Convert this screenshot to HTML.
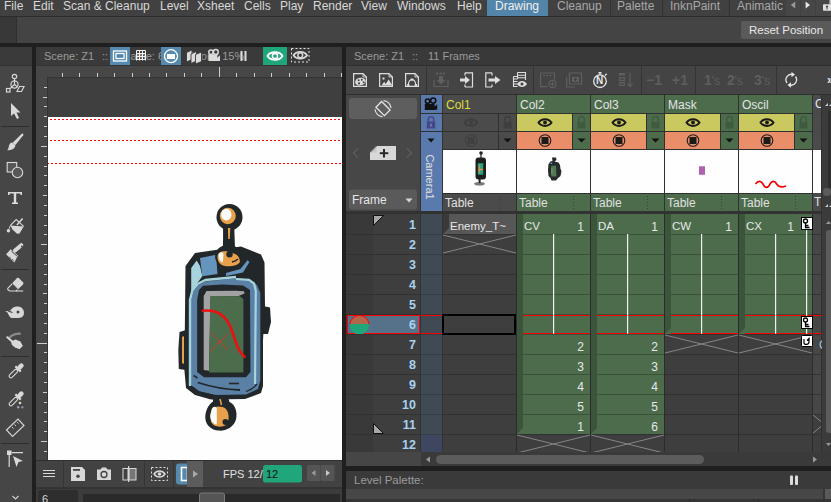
<!DOCTYPE html>
<html><head><meta charset="utf-8">
<style>
*{box-sizing:border-box;margin:0;padding:0}
html,body{width:831px;height:502px;overflow:hidden;background:#1f1f1f;font-family:"Liberation Sans",sans-serif;font-size:12px;color:#d8d8d8}
.a{position:absolute}
.t{position:absolute;white-space:pre;line-height:14px}
svg{position:absolute;overflow:visible}
</style></head><body>
<!-- MENU BAR -->
<div class="a" style="left:0;top:0;width:831px;height:16px;background:#414141"></div>
<div class="a" style="left:0;top:16px;width:831px;height:1px;background:#2c2c2c"></div>
<div class="t" style="left:4px;top:-1px;font-size:12px">File</div>
<div class="t" style="left:33px;top:-1px">Edit</div>
<div class="t" style="left:63px;top:-1px">Scan &amp; Cleanup</div>
<div class="t" style="left:160px;top:-1px">Level</div>
<div class="t" style="left:197px;top:-1px">Xsheet</div>
<div class="t" style="left:244px;top:-1px">Cells</div>
<div class="t" style="left:280px;top:-1px">Play</div>
<div class="t" style="left:313px;top:-1px">Render</div>
<div class="t" style="left:361px;top:-1px">View</div>
<div class="t" style="left:397px;top:-1px">Windows</div>
<div class="t" style="left:457px;top:-1px">Help</div>
<div class="a" style="left:487px;top:0;width:61px;height:16px;background:#5385aa"></div>
<div class="t" style="left:495px;top:-1px;color:#f0f0f0">Drawing</div>
<div class="t" style="left:557px;top:-1px;color:#a8a8a8">Cleanup</div>
<div class="a" style="left:610px;top:0;width:1px;height:16px;background:#333"></div>
<div class="t" style="left:617px;top:-1px;color:#a8a8a8">Palette</div>
<div class="a" style="left:662px;top:0;width:1px;height:16px;background:#333"></div>
<div class="t" style="left:670px;top:-1px;color:#a8a8a8">InknPaint</div>
<div class="a" style="left:729px;top:0;width:1px;height:16px;background:#333"></div>
<div class="a" style="left:730px;top:0;width:56px;height:16px;overflow:hidden"><div class="t" style="left:7px;top:-1px;color:#a8a8a8">Animatic</div></div>
<div class="a" style="left:786px;top:0;width:14px;height:16px;background:#474747"></div>
<div class="a" style="left:801px;top:0;width:14px;height:16px;background:#474747"></div>
<div class="a" style="left:816px;top:0;width:15px;height:16px;background:#474747"></div>

<!-- TOOLBAR ROW -->
<div class="a" style="left:0;top:17px;width:831px;height:26px;background:#444444"></div>
<div class="a" style="left:0;top:17px;width:16px;height:26px;background:#383838"></div>
<div class="a" style="left:16px;top:17px;width:1px;height:26px;background:#303030"></div>
<div class="a" style="left:741px;top:21px;width:95px;height:18px;background:#5a5a5a;border-radius:2px"></div>
<div class="t" style="left:749px;top:23px;font-size:11.5px;color:#e8e8e8">Reset Position</div>

<!-- LEFT TOOL PANEL -->
<div class="a" style="left:0;top:47px;width:32px;height:18px;background:#3a3a3a"></div>
<div class="a" style="left:0;top:65px;width:32px;height:1px;background:#333"></div>
<div class="a" style="left:0;top:66px;width:32px;height:436px;background:#464646"></div>


<!-- left tool icons -->
<svg class="a" style="left:0;top:0" width="32" height="502" viewBox="0 0 32 502">
<g fill="none" stroke="#d6d6d6" stroke-width="1.2">
 <circle cx="14.5" cy="76.5" r="2.2"/>
 <line x1="14.5" y1="78.7" x2="14.5" y2="84.5"/>
 <circle cx="14.5" cy="84.5" r="3.6"/>
 <path d="M14.5 84.5 L11.5 87 M14.5 84.5 L17.5 87"/>
 <rect x="6.5" y="88.5" width="3.5" height="3.5"/>
 <path d="M10 88.5 L12 87"/>
 <path d="M19.5 86.5 L24 86.5 L21.5 91.5 L17 91.5 Z"/>
</g>
<path d="M11 103 L11 116 L14 113.5 L17 119 L19 118 L16.5 112.5 L20.5 112.5 Z" fill="#d8d8d8"/>
<rect x="1" y="126" width="28" height="1" fill="#2e2e2e"/>
<path d="M21.8 133.8 C22.8 133.2 23.8 134.2 23.2 135.2 L15.2 145.2 L12.6 142.8 Z" fill="#d8d8d8"/>
<path d="M12.2 142.6 L15.4 145.6 C15 148.6 11.5 150.8 7.2 150.2 C8.8 148.8 8.6 146.4 9.4 144.6 C10 143.4 11 142.6 12.2 142.6 Z" fill="#d8d8d8"/>
<rect x="7.2" y="162.5" width="9.5" height="9.5" fill="#575757" stroke="#dadada" stroke-width="1.1"/>
<circle cx="17.5" cy="172.5" r="5.2" fill="#575757" stroke="#dadada" stroke-width="1.1"/>
<path d="M8 192 L22 192 L22 195 L20.5 195 L20.5 193.6 L16.2 193.6 L16.2 202.5 L18 202.5 L18 204 L12 204 L12 202.5 L13.8 202.5 L13.8 193.6 L9.5 193.6 L9.5 195 L8 195 Z" fill="#dcdcdc"/>
<path d="M10.4 225.4 L23.7 226.4 L19.5 233.6 L17 233.8 L12.3 229.2 Z" fill="#d8d8d8"/>
<path d="M10.4 225.4 L16.2 219.6 L23.7 226.4" fill="none" stroke="#d8d8d8" stroke-width="1.1"/>
<path d="M10.8 225.2 C9.5 226.5 9.2 228 9.3 229.3" fill="none" stroke="#d8d8d8" stroke-width="1"/>
<circle cx="8.4" cy="230.8" r="1.7" fill="#d8d8d8"/>
<path d="M16.9 225 L22.6 218.4" stroke="#d8d8d8" stroke-width="1.5"/>
<path d="M15 250.6 L21.3 245.2" stroke="#d8d8d8" stroke-width="4" stroke-linecap="round"/>
<circle cx="21.9" cy="246.6" r="1" fill="#464646"/>
<path d="M10.7 249.2 L18 255.4 L14.3 262.6 L6.1 254.3 Z" fill="#d8d8d8"/>
<path d="M11.4 251 L17 256.2" stroke="#464646" stroke-width="1"/>
<path d="M12 259.2 L13.5 260.5 M9.5 257 L10.8 258.2" stroke="#464646" stroke-width="0.9"/>
<rect x="1" y="269" width="28" height="1" fill="#2e2e2e"/>
<path d="M16.8 278.2 C17.5 277.6 18.3 277.6 19 278.2 L23 282.2 C23.6 282.9 23.6 283.7 23 284.4 L18.2 289.2 L12.2 283.2 Z" fill="#d8d8d8"/>
<path d="M12.2 283.8 L8 288 C7.5 288.6 7.5 289.3 8 289.8 L9.6 291 L16 291 L17.6 289.6" fill="none" stroke="#d8d8d8" stroke-width="1.1"/>
<path d="M16 291 L23.2 291" stroke="#d8d8d8" stroke-width="1.1"/>
<path d="M5 311.5 L10.5 310.5 C12 307.5 15 306 18.5 306.5 C23 307.2 24.5 311 23.8 314.5 C23.2 317 21 318 18 318 L11.5 318 C9.5 317.5 8.5 314.5 7.5 312.5 Z" fill="#d8d8d8"/>
<circle cx="18" cy="312" r="1.5" fill="#464646"/>
<path d="M8 311 L12.5 312.5" stroke="#424242" stroke-width="1.2"/>
<path d="M9 338 C11.5 335 16 333.4 20.8 333.6" fill="none" stroke="#8a8a8a" stroke-width="2.2"/>
<path d="M7.3 337.2 L13 342.2" stroke="#d8d8d8" stroke-width="2" stroke-linecap="round"/>
<path d="M11 341.5 L15.5 339.6 L20.5 341.5 L22.8 346 L19.5 349.2 L15 347.5 L12 345 Z" fill="#d8d8d8"/>
<rect x="1" y="356" width="28" height="1" fill="#2e2e2e"/>
<g transform="translate(15.5 371.5) rotate(45)"><rect x="-2.3" y="-10.5" width="4.6" height="6.5" rx="2" fill="#d8d8d8"/><rect x="-3.8" y="-4.8" width="7.6" height="2.4" rx="0.6" fill="#d8d8d8"/><rect x="-1.7" y="-2.2" width="3.4" height="10.5" rx="1.7" fill="none" stroke="#d8d8d8" stroke-width="1.1"/></g>
<g transform="translate(15.5 399.5) rotate(45)"><rect x="-2.3" y="-10.5" width="4.6" height="6.5" rx="2" fill="#d8d8d8"/><rect x="-3.8" y="-4.8" width="7.6" height="2.4" rx="0.6" fill="#d8d8d8"/><rect x="-1.7" y="-2.2" width="3.4" height="10.5" rx="1.7" fill="none" stroke="#d8d8d8" stroke-width="1.1"/></g>
<circle cx="20" cy="403" r="1.3" fill="#d8d8d8"/><circle cx="18.2" cy="407.2" r="1.2" fill="#8fa3b8"/><circle cx="22.3" cy="407.2" r="1.2" fill="#8a8a8a"/>
<path d="M6.5 430 L18 419 L24 425.5 L12.5 436.5 Z" fill="none" stroke="#d0d4d6" stroke-width="1.2"/>
<path d="M12 427 L13.5 428.5 M14.5 424.5 L16 426 M17 422 L18.5 423.5" stroke="#d0d0d0" stroke-width="1"/>
<rect x="1" y="443" width="28" height="1" fill="#2e2e2e"/>
<rect x="7" y="450.5" width="4.5" height="4.5" fill="#d8d8d8"/>
<path d="M9.2 455 L9.2 467 M11.5 452.7 L23 452.7" stroke="#d8d8d8" stroke-width="1.2"/>
<path d="M13 456 L23 461 L18.5 462 L16.5 467 Z" fill="#d8d8d8"/>
<path d="M12.5 496 L15.5 499 L18.5 496" fill="none" stroke="#cfcfcf" stroke-width="1.1"/>
</svg>

<!-- VIEWER PANEL -->
<div class="a" style="left:36px;top:47px;width:306px;height:18px;background:#3a3a3a"></div>
<div class="a" style="left:36px;top:65px;width:306px;height:1px;background:#333"></div>
<div class="a" style="left:36px;top:66px;width:306px;height:394px;background:#474747"></div>
<div class="a" style="left:47px;top:77px;width:295px;height:383px;background:#3f3f3f;border-left:1px solid #353535;border-top:1px solid #353535"></div>
<div class="a" style="left:48px;top:117px;width:294px;height:343px;background:#fefefe"></div>

<!-- viewer title -->
<div class="t" style="left:44px;top:49px;font-size:11px;color:#9a9a9a">Scene: Z1</div>
<div class="t" style="left:102px;top:49px;font-size:11px;color:#9a9a9a">::</div>
<div class="t" style="left:120px;top:49px;font-size:11px;color:#9a9a9a">Frame: 6</div>
<div class="t" style="left:171px;top:49px;font-size:11px;color:#9a9a9a">::</div>
<div class="t" style="left:188px;top:49px;font-size:11px;color:#9a9a9a">Zoom: 15%</div>
<div class="a" style="left:110px;top:47px;width:20px;height:18px;background:#5589ae"></div>
<svg class="a" style="left:110px;top:47px" width="20" height="18"><rect x="3.5" y="4" width="13" height="10" fill="none" stroke="#fff" stroke-width="1.3"/><rect x="6" y="6.5" width="8" height="5" fill="none" stroke="#fff" stroke-width="1.2"/></svg>
<svg class="a" style="left:136px;top:50px" width="11" height="11"><g stroke="#f0f0f0" stroke-width="1"><path d="M0.5 0.5V10.5M3.5 0.5V10.5M6.5 0.5V10.5M9.5 0.5V10.5M0.5 0.5H9.5M0.5 3.5H9.5M0.5 6.5H9.5M0.5 9.5H9.5"/></g></svg>
<div class="a" style="left:161px;top:47px;width:20px;height:18px;background:#5589ae"></div>
<svg class="a" style="left:161px;top:47px" width="20" height="18"><circle cx="10" cy="9.2" r="6.5" fill="none" stroke="#fff" stroke-width="1.3"/><rect x="6" y="7" width="8" height="5" fill="#fff"/></svg>
<svg class="a" style="left:185px;top:49px" width="20" height="15"><g fill="#dcdcdc" stroke="#3a3a3a" stroke-width="0.9"><path d="M1.5 3.5 L7 1 L7 10.5 L1.5 13 Z"/><path d="M6 5 L11.5 2.5 L11.5 12 L6 14.5 Z"/><path d="M10.5 5.5 L16.5 3 L16.5 12.5 L10.5 15 Z"/></g></svg>
<svg class="a" style="left:207px;top:49px" width="14" height="14"><g fill="none" stroke="#dcdcdc" stroke-width="1.5"><circle cx="4" cy="3.2" r="2.2"/><circle cx="8.8" cy="3" r="2.4"/></g><rect x="1.5" y="6" width="8.8" height="6" fill="#dcdcdc"/><path d="M10 9 L13 6.3 V12 H10 Z" fill="#dcdcdc"/></svg>
<svg class="a" style="left:239px;top:50px" width="9" height="12"><rect x="1.5" y="1" width="2" height="10" fill="#dcdcdc"/><rect x="5.5" y="1" width="2" height="10" fill="#dcdcdc"/></svg>
<div class="a" style="left:263px;top:47px;width:24px;height:18px;background:#21a57b"></div>
<svg class="a" style="left:263px;top:47px" width="24" height="18"><path d="M4.5 9 C7.5 4 16.5 4 19.5 9 C16.5 14 7.5 14 4.5 9 Z" fill="none" stroke="#fff" stroke-width="1.8"/><circle cx="12" cy="9" r="2.6" fill="none" stroke="#fff" stroke-width="1.5"/></svg>
<svg class="a" style="left:291px;top:48px" width="19" height="15"><rect x="0.5" y="0.5" width="17.5" height="13.5" fill="none" stroke="#e0e0e0" stroke-width="1" stroke-dasharray="2 2"/><path d="M2.5 7.3 C5.5 2.8 13 2.8 16 7.3 C13 11.8 5.5 11.8 2.5 7.3 Z" fill="none" stroke="#dadada" stroke-width="1.7"/><circle cx="9.25" cy="7.3" r="2.4" fill="none" stroke="#dadada" stroke-width="1.4"/></svg>
<svg class="a" style="left:0;top:0" width="831" height="502"><rect x="62" y="73" width="1" height="4" fill="#cfcfcf"/><rect x="79" y="73" width="1" height="4" fill="#cfcfcf"/><rect x="97" y="73" width="1" height="4" fill="#cfcfcf"/><rect x="114" y="73" width="1" height="4" fill="#cfcfcf"/><rect x="132" y="73" width="1" height="4" fill="#cfcfcf"/><rect x="149" y="73" width="1" height="4" fill="#cfcfcf"/><rect x="166" y="73" width="1" height="4" fill="#cfcfcf"/><rect x="184" y="73" width="1" height="4" fill="#cfcfcf"/><rect x="201" y="73" width="1" height="4" fill="#cfcfcf"/><rect x="219" y="67" width="1" height="10" fill="#cfcfcf"/><rect x="236" y="73" width="1" height="4" fill="#cfcfcf"/><rect x="254" y="73" width="1" height="4" fill="#cfcfcf"/><rect x="271" y="73" width="1" height="4" fill="#cfcfcf"/><rect x="289" y="73" width="1" height="4" fill="#cfcfcf"/><rect x="306" y="73" width="1" height="4" fill="#cfcfcf"/><rect x="324" y="73" width="1" height="4" fill="#cfcfcf"/><rect x="341" y="73" width="1" height="4" fill="#cfcfcf"/><rect x="44" y="87" width="3" height="1" fill="#cfcfcf"/><rect x="43" y="97" width="4" height="1" fill="#cfcfcf"/><rect x="44" y="106" width="3" height="1" fill="#cfcfcf"/><rect x="44" y="116" width="3" height="1" fill="#cfcfcf"/><rect x="44" y="126" width="3" height="1" fill="#cfcfcf"/><rect x="44" y="136" width="3" height="1" fill="#cfcfcf"/><rect x="41" y="146" width="6" height="1" fill="#cfcfcf"/><rect x="44" y="156" width="3" height="1" fill="#cfcfcf"/><rect x="44" y="166" width="3" height="1" fill="#cfcfcf"/><rect x="44" y="175" width="3" height="1" fill="#cfcfcf"/><rect x="44" y="185" width="3" height="1" fill="#cfcfcf"/><rect x="43" y="195" width="4" height="1" fill="#cfcfcf"/><rect x="44" y="205" width="3" height="1" fill="#cfcfcf"/><rect x="44" y="215" width="3" height="1" fill="#cfcfcf"/><rect x="44" y="225" width="3" height="1" fill="#cfcfcf"/><rect x="44" y="234" width="3" height="1" fill="#cfcfcf"/><rect x="41" y="244" width="6" height="1" fill="#cfcfcf"/><rect x="44" y="254" width="3" height="1" fill="#cfcfcf"/><rect x="44" y="264" width="3" height="1" fill="#cfcfcf"/><rect x="44" y="274" width="3" height="1" fill="#cfcfcf"/><rect x="44" y="284" width="3" height="1" fill="#cfcfcf"/><rect x="43" y="293" width="4" height="1" fill="#cfcfcf"/><rect x="44" y="303" width="3" height="1" fill="#cfcfcf"/><rect x="44" y="313" width="3" height="1" fill="#cfcfcf"/><rect x="44" y="323" width="3" height="1" fill="#cfcfcf"/><rect x="44" y="333" width="3" height="1" fill="#cfcfcf"/><rect x="37" y="343" width="10" height="1" fill="#cfcfcf"/><rect x="44" y="352" width="3" height="1" fill="#cfcfcf"/><rect x="44" y="362" width="3" height="1" fill="#cfcfcf"/><rect x="44" y="372" width="3" height="1" fill="#cfcfcf"/><rect x="44" y="382" width="3" height="1" fill="#cfcfcf"/><rect x="43" y="392" width="4" height="1" fill="#cfcfcf"/><rect x="44" y="402" width="3" height="1" fill="#cfcfcf"/><rect x="44" y="412" width="3" height="1" fill="#cfcfcf"/><rect x="44" y="421" width="3" height="1" fill="#cfcfcf"/><rect x="44" y="431" width="3" height="1" fill="#cfcfcf"/><rect x="41" y="441" width="6" height="1" fill="#cfcfcf"/><rect x="44" y="451" width="3" height="1" fill="#cfcfcf"/></svg>
<!-- red dashed lines -->
<div class="a" style="left:50px;top:119px;width:291px;height:1px;background:repeating-linear-gradient(90deg,#f00 0 2px,transparent 2px 4px)"></div>
<div class="a" style="left:50px;top:140px;width:291px;height:1px;background:repeating-linear-gradient(90deg,#f00 0 2px,transparent 2px 4px)"></div>
<div class="a" style="left:48px;top:163px;width:293px;height:1px;background-image:repeating-linear-gradient(90deg,#f00 0 2px,transparent 2px 4px);background-position:-1px 0"></div>

<!-- CHAR -->
<svg class="a" style="left:0;top:0" width="831" height="502"><path d="M186 330 L179.5 332 L178.3 350 L178.8 369 L186 370 Z" fill="#22272a" stroke="none" stroke-width="0" /><path d="M182 337 L184 336 L184 364 L182 363 Z" fill="#e9a04a" stroke="none" stroke-width="0" /><path d="M263 306 L270 307.5 L271 322 L268 334 L262 334 Z" fill="#22272a" stroke="none" stroke-width="0" /><path d="M185.5 266 L195 253 L219 249.5 L241 246.5 L261 254.5 L264.5 262.5 L265 307 L263 340 L263 386 L261 393 L245 399 L211 399.5 L195 395 L186 388 L184.4 370 Z" fill="#22272a" stroke="none" stroke-width="0" /><path d="M191.2 268 L196.7 260.5 L200 266 L202.3 276.3 L193.6 288.3 L191.2 298 Z" fill="#a6d3dc" stroke="none" stroke-width="0" /><path d="M200 258 L216 254.8 L217.5 274 L202.3 276.3 Z" fill="#6594bc" stroke="none" stroke-width="0" /><path d="M226 273 L240.4 269 L247.5 260.2 L249.5 262 L243 272.5 L226 276 Z" fill="#6594bc" stroke="none" stroke-width="0" /><path d="M191 384 L191 300 L193.5 291 L198.5 285 L206 281.5 L237 278 L250 280 L257 285 L260.3 293 L260.3 380 L258 389 L246 394.5 L214 395 L199 391 L191 385 Z" fill="#5a80a6" stroke="none" stroke-width="0" /><path d="M190 386 V300 L192.4 290.5 L197.6 284 L205.5 280 L236 277" fill="none" stroke="#a6d3dc" stroke-width="2.4" /><path d="M236 279 L249 279.8 L254 283.5 L255.8 291 L255 384" fill="none" stroke="#a6d3dc" stroke-width="2.2" /><path d="M197.1 300 L199 290 L203 285.8 L222 284.5 L243 285.5 L250 290 L250.5 372 L246 377.3 L204 377.3 L197.1 372 Z" fill="#22272a" stroke="none" stroke-width="0" /><path d="M203.7 296 L206.5 291 L236 290.7 L244 291.3 L244.5 293.5 L238 296.3 L210.5 296.5 L209.1 370.7 L203.7 370 Z" fill="#a2a2a2" stroke="none" stroke-width="0" /><path d="M210.3 296.3 L240 296.3 L243.4 299 L243.4 372.5 L209.1 372.5 Z" fill="#4b6d4b" stroke="none" stroke-width="0" /><path d="M202.8 310.8 C214 309.5 224 313 230 326 C236 340 237 351 244.6 356.8" fill="none" stroke="#ee1010" stroke-width="2.6" stroke-linecap="round"/><g stroke="#e83030" stroke-width="1.1" stroke-dasharray="1.6 1.6"><path d="M211 350.8 L229 332.8 M211 332.8 L229 350.8"/></g><circle cx="219.9" cy="341.8" r="1.1" fill="#e83030"/><path d="M197.7 382.5 C210 386.5 225 389.5 240 390" fill="none" stroke="#22272a" stroke-width="1.8" /><path d="M229 383.5 L239 383.5" fill="none" stroke="#22272a" stroke-width="1.6" /><path d="M193.6 375.5 L197.5 378" fill="none" stroke="#22272a" stroke-width="1.5" /><path d="M246 391.5 C250 390 254 388 257 384" fill="none" stroke="#22272a" stroke-width="1.3" /><path d="M204 393 L216 395.5" fill="none" stroke="#22272a" stroke-width="1.2" /><ellipse cx="229.5" cy="217.2" rx="13" ry="13.2" fill="#22272a"/><ellipse cx="227.8" cy="216" rx="8" ry="8.2" fill="#e9a04a"/><ellipse cx="226.3" cy="214.6" rx="5.2" ry="5.9" fill="#fbfbfb"/><path d="M223.1 228 L234.3 228 L235 249 L223 249 Z" fill="#22272a" stroke="none" stroke-width="0" /><path d="M227.9 228 L230.3 228 L229.8 239 L228.2 239 Z" fill="#e9a04a" stroke="none" stroke-width="0" /><ellipse cx="228.3" cy="256.3" rx="13.2" ry="11.6" fill="#22272a"/><path d="M217.5 256 C218 251 226 250 232 253 C238 254 240 258 239.9 262 C238 265.5 232 266.5 226 266.2 C220 266 217 261 217.5 256 Z" fill="#e9a04a" stroke="none" stroke-width="0" /><path d="M218.7 254.5 C219.5 251.5 223 251.5 223.4 254 L223 262.2 C220 262.2 218.5 259 218.7 254.5 Z" fill="#fbfbfb" stroke="none" stroke-width="0" /><circle cx="229.5" cy="254.3" r="3.2" fill="#22272a"/><path d="M232 262 C234.5 261.5 236.5 260.5 238 259" fill="none" stroke="#22272a" stroke-width="1.3" /><path d="M213 397 L228 397 L229.5 402 C236 405 237.5 413 236 419.5 C233.5 427.5 226 431 219 430.6 C210 430 204.8 424 205.3 416 C205.8 409 209.5 404 213 401.5 Z" fill="#22272a" stroke="none" stroke-width="0" /><path d="M212 409 C214 406 222 405.5 226 409 C229.5 413 229.5 421.5 226 425 C221 428 213 427 211 421.5 C210 416.5 210.5 412 212 409 Z" fill="#e9a04a" stroke="none" stroke-width="0" /><path d="M211.8 409 C213 406.5 216 406 216.8 408.5 L216.8 424.5 C213 424.5 209.8 420 210.3 415 Z" fill="#fbfbfb" stroke="none" stroke-width="0" /><circle cx="225.5" cy="422" r="3" fill="#22272a"/><path d="M220 399 L221.5 405" fill="none" stroke="#e9a04a" stroke-width="1.6" /></svg>
<!-- /CHAR -->
<div class="a" style="left:36px;top:460px;width:306px;height:1px;background:#2f2f2f"></div>
<div class="a" style="left:36px;top:461px;width:306px;height:26px;background:#424242"></div>
<div class="a" style="left:36px;top:487px;width:306px;height:2px;background:#343434"></div>
<div class="a" style="left:36px;top:489px;width:306px;height:13px;background:#3c3c3c"></div>


<!-- viewer bottom toolbar -->
<svg class="a" style="left:0;top:0" width="831" height="502">
<rect x="43" y="470" width="12" height="1" fill="#d8d8d8"/><rect x="43" y="473" width="12" height="1" fill="#d8d8d8"/><rect x="43" y="476" width="12" height="1" fill="#d8d8d8"/>
<rect x="63" y="461" width="1" height="26" fill="#353535"/>
<path d="M71 467 L82 467 L85 470 L85 481 L71 481 Z" fill="#d8d8d8"/>
<rect x="73" y="469" width="7" height="1.8" fill="#464646"/>
<circle cx="78" cy="476.2" r="1.8" fill="#464646"/>
<path d="M97 469.5 L100.5 469.5 L102 467.5 L106 467.5 L107.5 469.5 L111 469.5 L111 480 L97 480 Z" fill="#d8d8d8"/>
<circle cx="104" cy="474.5" r="3" fill="none" stroke="#424242" stroke-width="1.3"/>
<rect x="123" y="468.5" width="5" height="11.5" fill="none" stroke="#d8d8d8" stroke-width="1"/>
<rect x="129" y="468.5" width="7" height="11.5" fill="#767676" stroke="#d8d8d8" stroke-width="1"/>
<rect x="128" y="466" width="1.2" height="16" fill="#d8d8d8"/>
<rect x="144" y="461" width="1" height="26" fill="#353535"/>
<rect x="151.5" y="467.5" width="16" height="13" fill="none" stroke="#e0e0e0" stroke-width="1" stroke-dasharray="2 2"/>
<path d="M154 474 C157 470 162 470 165 474 C162 478 157 478 154 474 Z" fill="none" stroke="#dadada" stroke-width="1.4"/>
<circle cx="159.5" cy="474" r="1.8" fill="#dadada"/>
<rect x="173" y="461" width="1" height="26" fill="#353535"/>
<path d="M179 463.5 L187 463.5 L187 484.5 L179 484.5 Q176 484.5 176 481.5 L176 466.5 Q176 463.5 179 463.5 Z" fill="#5589ae"/>
<rect x="181.5" y="467.5" width="6" height="13" fill="none" stroke="#fff" stroke-width="1.6"/>
<rect x="187" y="461" width="16" height="26" fill="#5c5c5c"/>
<path d="M193 470.5 L198 474 L193 477.5 Z" fill="#a8a8a8"/>
<rect x="263" y="465" width="39" height="17.5" rx="2.5" fill="#21a57b"/>
<rect x="307" y="465" width="13.5" height="16" rx="1" fill="#555555"/>
<rect x="321" y="465" width="13.5" height="16" rx="1" fill="#555555"/>
<path d="M315.5 470 L311.5 473 L315.5 476 Z" fill="#9a9a9a"/>
<path d="M326 470 L330 473 L326 476 Z" fill="#c8c8c8"/>
<rect x="38" y="490" width="40" height="14" rx="3" fill="#2e2e2e"/>
<rect x="83" y="494" width="257" height="10" fill="#2a2a2a"/>
<rect x="199.5" y="493" width="25" height="12" rx="2" fill="#555" stroke="#7a7a7a" stroke-width="1"/>
</svg>
<div class="t" style="left:223px;top:467px;font-size:11px;color:#e0e0e0">FPS 12/</div>
<div class="t" style="left:266px;top:467px;font-size:11px;color:#101010">12</div>
<div class="t" style="left:42px;top:492px;font-size:11px;color:#d8d8d8">6</div>

<!-- XSHEET PANEL -->
<div class="a" style="left:346px;top:47px;width:485px;height:18px;background:#393939"></div>
<div class="a" style="left:346px;top:65px;width:485px;height:1px;background:#2f2f2f"></div>
<div class="a" style="left:346px;top:66px;width:485px;height:28px;background:#444444"></div>
<div class="a" style="left:346px;top:94px;width:485px;height:1px;background:#2e2e2e"></div>
<div class="a" style="left:346px;top:95px;width:485px;height:116px;background:#474747"></div>
<div class="a" style="left:346px;top:211px;width:485px;height:3px;background:#333"></div>
<div class="a" style="left:346px;top:214px;width:485px;height:238px;background:#3e3e3e"></div>
<div class="a" style="left:346px;top:452px;width:485px;height:14px;background:#3a3a3a"></div>

<!-- XSHEET CONTENT -->
<svg class="a" style="left:0;top:0" width="831" height="502"><path d="M353.6 73.6 H363 L366.4 77 V86.4 H353.6 Z" fill="none" stroke="#dedede" stroke-width="1.2" /><path d="M363 73.6 V77 H366.4" fill="none" stroke="#dedede" stroke-width="0.9" /><path d="M360.5 77.8 C364 77.8 366 79.6 365.6 81.8 C365.2 84 362 85.8 358.6 85.4 C355.6 85 354.6 82.6 355.6 80.4 C356.4 78.8 358.2 77.8 360.5 77.8 Z" fill="#dedede"/><g fill="#444"><circle cx="358.6" cy="80.2" r="1"/><circle cx="361.8" cy="79.8" r="1"/><circle cx="363.6" cy="82.2" r="1"/><circle cx="359" cy="83.4" r="1.1"/></g><path d="M379.6 73.6 H389 L392.4 77 V86.4 H379.6 Z" fill="none" stroke="#dedede" stroke-width="1.2" /><path d="M389 73.6 V77 H392.4" fill="none" stroke="#dedede" stroke-width="0.9" /><path d="M381.5 85.6 L384.2 81.8 L386.6 85.6 Z M384.8 85.6 L388.6 79.6 L392.4 85.6 Z" fill="#dedede" stroke="none" stroke-width="1" /><rect x="382.5" y="77.5" width="2" height="2" fill="#dedede" /><path d="M405.6 73.6 H415 L418.4 77 V86.4 H405.6 Z" fill="none" stroke="#dedede" stroke-width="1.2" /><path d="M415 73.6 V77 H418.4" fill="none" stroke="#dedede" stroke-width="0.9" /><path d="M408.2 85 C408.6 81 410.2 79.6 412 79.6 C413.8 79.6 415.4 81 415.8 85" fill="none" stroke="#dedede" stroke-width="1.1" /><rect x="407.2" y="84" width="2.2" height="2.2" fill="#dedede" /><rect x="414.8" y="84" width="2.2" height="2.2" fill="#dedede" /><rect x="410.9" y="78.5" width="2.2" height="2.2" fill="#dedede" /><rect x="426" y="65" width="1" height="29" fill="#343434" /><rect x="436" y="72.5" width="2" height="2" fill="#5f5f5f" /><rect x="439.5" y="72.5" width="2" height="2" fill="#5f5f5f" /><rect x="443" y="72.5" width="2" height="2" fill="#5f5f5f" /><path d="M434 80 V86.5 H448 V80" fill="none" stroke="#5f5f5f" stroke-width="1.2" /><path d="M439 76 H443 V80 H445.5 L441 84.5 L436.5 80 H439 Z" fill="#5f5f5f" stroke="none" stroke-width="1" /><path d="M465 72.8 H472.5 V87 H465 M465 72.8 V75.5 M465 87 V84.5" fill="none" stroke="#dedede" stroke-width="1.2" /><path d="M460 78.5 H465 V76 L470 80 L465 84 V81.5 H460 Z" fill="#dedede" stroke="none" stroke-width="1" /><path d="M492 72.8 H485.8 V87 H492 M492 72.8 V75.5 M492 87 V84.5" fill="none" stroke="#dedede" stroke-width="1.2" /><path d="M488.5 78.5 H495 V76 L500.5 80 L495 84 V81.5 H488.5 Z" fill="#dedede" stroke="none" stroke-width="1" /><path d="M517.5 72.5 H525.5 V80 M517.5 72.5 V79 M517.5 75.3 H525.5 M517.5 77.8 H525.5" fill="none" stroke="#dedede" stroke-width="1.1" /><path d="M513.5 76.5 H517.5 M513.5 76.5 V86.5 H517.5 M513.5 79 H517.5 M513.5 81.5 H517.5 M513.5 84 H517.5" fill="none" stroke="#dedede" stroke-width="1.1" /><path d="M517 84 C519.5 80 524.5 80 527 84 C524.5 88 519.5 88 517 84 Z" fill="#dedede" stroke="none" stroke-width="1" /><circle cx="522" cy="84" r="1.5" fill="#404040"/><rect x="533" y="65" width="1" height="29" fill="#343434" /><path d="M540.6 73 H554.5 V79.5 M540.6 73 V86.6 H547.5" fill="none" stroke="#5f5f5f" stroke-width="1.2" /><rect x="543" y="75" width="2" height="1.2" fill="#5f5f5f" /><rect x="546" y="75" width="2" height="1.2" fill="#5f5f5f" /><rect x="549" y="75" width="2" height="1.2" fill="#5f5f5f" /><circle cx="552.5" cy="84" r="3.6" fill="none" stroke="#5f5f5f" stroke-width="1.2"/><path d="M552.5 82 V86 M550.5 84 H554.5" fill="none" stroke="#5f5f5f" stroke-width="1.2" /><path d="M566.6 77 V87 H575" fill="none" stroke="#5f5f5f" stroke-width="1.2" /><path d="M569.5 73 H581.5 V84 H569.5 Z" fill="none" stroke="#5f5f5f" stroke-width="1.2" /><path d="M572 77 H579 V82 H572 Z" fill="#5f5f5f" stroke="none" stroke-width="1" /><path d="M575.5 78 V81 M574 79.5 H577" fill="none" stroke="#404040" stroke-width="1" /><circle cx="600" cy="81.2" r="6.3" fill="none" stroke="#e6e6e6" stroke-width="1.3"/><rect x="598.5" y="72" width="3" height="1.5" fill="#e6e6e6" /><rect x="599.4" y="73" width="1.2" height="2" fill="#e6e6e6" /><path d="M605 75.5 L606.7 73.8" fill="none" stroke="#e6e6e6" stroke-width="1.3" /><rect x="619" y="73" width="6" height="2.5" fill="#5f5f5f" /><path d="M619.6 77.6 H624.4 V80.4 H619.6 Z M619.6 82.6 H624.4 V85.4 H619.6 Z" fill="none" stroke="#5f5f5f" stroke-width="1.1" /><path d="M630 73 V86" fill="none" stroke="#5f5f5f" stroke-width="1.2" /><path d="M627.5 83.5 L630 86.5 L632.5 83.5" fill="none" stroke="#5f5f5f" stroke-width="1.2" /><rect x="641" y="65" width="1" height="29" fill="#343434" /><rect x="695" y="65" width="1" height="29" fill="#343434" /><rect x="776" y="65" width="1" height="29" fill="#343434" /><path d="M787 83 A5.5 5.5 0 0 1 793 74.5" fill="none" stroke="#e6e6e6" stroke-width="1.3" /><path d="M791.5 72 L795 74.5 L791.5 77.3 Z" fill="#e6e6e6" stroke="none" stroke-width="1" /><path d="M795.5 76.5 A5.5 5.5 0 0 1 789.5 85" fill="none" stroke="#e6e6e6" stroke-width="1.3" /><path d="M791 82.3 L787.5 85 L791 87.8 Z" fill="#e6e6e6" stroke="none" stroke-width="1" /><rect x="349" y="98" width="68" height="21" fill="#5e5e5e" rx="3"/><g transform="translate(383 108.6) rotate(-45)"><rect x="-4" y="-6" width="8" height="12" fill="none" stroke="#e4e4e4" stroke-width="1.3"/></g><g fill="none" stroke="#e4e4e4" stroke-width="1.1"><path d="M383.5 100.6 A8 8 0 0 1 391 108"/><path d="M382.5 116.6 A8 8 0 0 1 375 109.2"/></g><path d="M358 148.5 L353.5 153 L358 157.5" fill="none" stroke="#5d5d5d" stroke-width="1.3" /><path d="M407 148.5 L411.5 153 L407 157.5" fill="none" stroke="#5d5d5d" stroke-width="1.3" /><path d="M370 152 L376 146 H396 V160 H370 Z" fill="#d8d8d8" stroke="none" stroke-width="1" /><path d="M370.5 152.5 L376.5 146.5 V152.5 Z" fill="#c8c8c8" stroke="none" stroke-width="1" /><path d="M370 152.5 L376.5 146" fill="none" stroke="#474747" stroke-width="1" /><rect x="383" y="149" width="2" height="8.5" fill="#2a2a2a" /><rect x="379.8" y="152.2" width="8.5" height="2" fill="#2a2a2a" /><rect x="349" y="189.5" width="68" height="20" fill="#5a5a5a" rx="3"/><path d="M405.5 198.5 H412.5 L409 202.5 Z" fill="#d6d6d6" stroke="none" stroke-width="1" /><rect x="420" y="95" width="1" height="119" fill="#333" /><rect x="421" y="95" width="21" height="116" fill="#5a79ad" /><rect x="421" y="113" width="21" height="1" fill="#303030" /><rect x="421" y="131" width="21" height="1" fill="#303030" /><g fill="none" stroke="#111" stroke-width="1.6"><circle cx="427.6" cy="101.2" r="2.2"/><circle cx="433.2" cy="100.6" r="2.6"/></g><g fill="#111"><rect x="424.8" y="104" width="9.8" height="6"/><path d="M434 107 L437.2 104.3 V109.8 H434 Z"/></g><path d="M428.3 122 V119.5 A2.7 2.7 0 0 1 433.7 119.5 V122" fill="none" stroke="#44488a" stroke-width="1.5" /><rect x="426.8" y="121.5" width="8.4" height="7" fill="#44488a" /><rect x="430.4" y="123.6" width="1.2" height="3" fill="#7f93c0" /><path d="M427.5 138.5 H434.5 L431 142.5 Z" fill="#111" stroke="none" stroke-width="1" /><rect x="442" y="95" width="1" height="119" fill="#333" /><rect x="443" y="95" width="73" height="18" fill="#4b4b4b" /><rect x="443" y="113" width="74" height="1" fill="#303030" /><rect x="443" y="114" width="55" height="17" fill="#4b4b4b" /><rect x="498" y="114" width="1" height="17" fill="#303030" /><rect x="499" y="114" width="17" height="17" fill="#4b4b4b" /><rect x="443" y="131" width="74" height="1" fill="#303030" /><rect x="443" y="132" width="55" height="17" fill="#4b4b4b" /><rect x="498" y="132" width="1" height="17" fill="#303030" /><rect x="499" y="132" width="17" height="17" fill="#4b4b4b" /><rect x="443" y="149" width="74" height="1" fill="#303030" /><rect x="443" y="150" width="73" height="43" fill="#fefefe" /><rect x="443" y="193" width="74" height="1" fill="#303030" /><rect x="443" y="194" width="73" height="17" fill="#4b4b4b" /><line x1="499.5" y1="196" x2="499.5" y2="210" stroke="#3a3a3a" stroke-dasharray="1 2"/><rect x="516" y="95" width="1" height="116" fill="#303030" /><path d="M464.5 122.5 C467.5 118.0 474.5 118.0 477.5 122.5 C474.5 127.0 467.5 127.0 464.5 122.5 Z" fill="none" stroke="#3e3e3e" stroke-width="2" /><circle cx="471" cy="122.5" r="1.9" fill="#3e3e3e"/><path d="M504.7 122 V119.3 A2.8 2.8 0 0 1 510.3 119.3 V122" fill="none" stroke="#3f3f3f" stroke-width="1.4" /><rect x="503.5" y="122" width="8" height="6.5" fill="#3f3f3f" /><circle cx="471" cy="140.5" r="5.8" fill="none" stroke="#404040" stroke-width="1.1"/><rect x="467.5" y="137" width="7" height="7" fill="#404040" /><path d="M503.5 138.5 H511.5 L507.5 142.5 Z" fill="#111" stroke="none" stroke-width="1" /><rect x="517" y="95" width="73" height="18" fill="#4c6c4c" /><rect x="517" y="113" width="74" height="1" fill="#303030" /><rect x="517" y="114" width="55" height="17" fill="#c9c95f" /><rect x="572" y="114" width="1" height="17" fill="#303030" /><rect x="573" y="114" width="17" height="17" fill="#4c6c4c" /><rect x="517" y="131" width="74" height="1" fill="#303030" /><rect x="517" y="132" width="55" height="17" fill="#e98e69" /><rect x="572" y="132" width="1" height="17" fill="#303030" /><rect x="573" y="132" width="17" height="17" fill="#4c6c4c" /><rect x="517" y="149" width="74" height="1" fill="#303030" /><rect x="517" y="150" width="73" height="43" fill="#fefefe" /><rect x="517" y="193" width="74" height="1" fill="#303030" /><rect x="517" y="194" width="73" height="17" fill="#4c6c4c" /><line x1="573.5" y1="196" x2="573.5" y2="210" stroke="#2f472f" stroke-dasharray="1 2"/><rect x="590" y="95" width="1" height="116" fill="#303030" /><path d="M538.5 122.5 C541.5 118.0 548.5 118.0 551.5 122.5 C548.5 127.0 541.5 127.0 538.5 122.5 Z" fill="none" stroke="#1b1b1b" stroke-width="2" /><circle cx="545" cy="122.5" r="1.9" fill="#1b1b1b"/><path d="M578.7 122 V119.3 A2.8 2.8 0 0 1 584.3 119.3 V122" fill="none" stroke="#3f5b3f" stroke-width="1.4" /><rect x="577.5" y="122" width="8" height="6.5" fill="#3f5b3f" /><circle cx="545" cy="140.5" r="5.8" fill="none" stroke="#1b1b1b" stroke-width="1.1"/><rect x="541.5" y="137" width="7" height="7" fill="#1b1b1b" /><path d="M577.5 138.5 H585.5 L581.5 142.5 Z" fill="#111" stroke="none" stroke-width="1" /><rect x="591" y="95" width="73" height="18" fill="#4c6c4c" /><rect x="591" y="113" width="74" height="1" fill="#303030" /><rect x="591" y="114" width="55" height="17" fill="#c9c95f" /><rect x="646" y="114" width="1" height="17" fill="#303030" /><rect x="647" y="114" width="17" height="17" fill="#4c6c4c" /><rect x="591" y="131" width="74" height="1" fill="#303030" /><rect x="591" y="132" width="55" height="17" fill="#e98e69" /><rect x="646" y="132" width="1" height="17" fill="#303030" /><rect x="647" y="132" width="17" height="17" fill="#4c6c4c" /><rect x="591" y="149" width="74" height="1" fill="#303030" /><rect x="591" y="150" width="73" height="43" fill="#fefefe" /><rect x="591" y="193" width="74" height="1" fill="#303030" /><rect x="591" y="194" width="73" height="17" fill="#4c6c4c" /><line x1="647.5" y1="196" x2="647.5" y2="210" stroke="#2f472f" stroke-dasharray="1 2"/><rect x="664" y="95" width="1" height="116" fill="#303030" /><path d="M612.5 122.5 C615.5 118.0 622.5 118.0 625.5 122.5 C622.5 127.0 615.5 127.0 612.5 122.5 Z" fill="none" stroke="#1b1b1b" stroke-width="2" /><circle cx="619" cy="122.5" r="1.9" fill="#1b1b1b"/><path d="M652.7 122 V119.3 A2.8 2.8 0 0 1 658.3 119.3 V122" fill="none" stroke="#3f5b3f" stroke-width="1.4" /><rect x="651.5" y="122" width="8" height="6.5" fill="#3f5b3f" /><circle cx="619" cy="140.5" r="5.8" fill="none" stroke="#1b1b1b" stroke-width="1.1"/><rect x="615.5" y="137" width="7" height="7" fill="#1b1b1b" /><path d="M651.5 138.5 H659.5 L655.5 142.5 Z" fill="#111" stroke="none" stroke-width="1" /><rect x="665" y="95" width="73" height="18" fill="#4c6c4c" /><rect x="665" y="113" width="74" height="1" fill="#303030" /><rect x="665" y="114" width="55" height="17" fill="#c9c95f" /><rect x="720" y="114" width="1" height="17" fill="#303030" /><rect x="721" y="114" width="17" height="17" fill="#4c6c4c" /><rect x="665" y="131" width="74" height="1" fill="#303030" /><rect x="665" y="132" width="55" height="17" fill="#e98e69" /><rect x="720" y="132" width="1" height="17" fill="#303030" /><rect x="721" y="132" width="17" height="17" fill="#4c6c4c" /><rect x="665" y="149" width="74" height="1" fill="#303030" /><rect x="665" y="150" width="73" height="43" fill="#fefefe" /><rect x="665" y="193" width="74" height="1" fill="#303030" /><rect x="665" y="194" width="73" height="17" fill="#4c6c4c" /><line x1="721.5" y1="196" x2="721.5" y2="210" stroke="#2f472f" stroke-dasharray="1 2"/><rect x="738" y="95" width="1" height="116" fill="#303030" /><path d="M686.5 122.5 C689.5 118.0 696.5 118.0 699.5 122.5 C696.5 127.0 689.5 127.0 686.5 122.5 Z" fill="none" stroke="#1b1b1b" stroke-width="2" /><circle cx="693" cy="122.5" r="1.9" fill="#1b1b1b"/><path d="M726.7 122 V119.3 A2.8 2.8 0 0 1 732.3 119.3 V122" fill="none" stroke="#3f5b3f" stroke-width="1.4" /><rect x="725.5" y="122" width="8" height="6.5" fill="#3f5b3f" /><circle cx="693" cy="140.5" r="5.8" fill="none" stroke="#1b1b1b" stroke-width="1.1"/><rect x="689.5" y="137" width="7" height="7" fill="#1b1b1b" /><path d="M725.5 138.5 H733.5 L729.5 142.5 Z" fill="#111" stroke="none" stroke-width="1" /><rect x="739" y="95" width="73" height="18" fill="#4c6c4c" /><rect x="739" y="113" width="74" height="1" fill="#303030" /><rect x="739" y="114" width="55" height="17" fill="#c9c95f" /><rect x="794" y="114" width="1" height="17" fill="#303030" /><rect x="795" y="114" width="17" height="17" fill="#4c6c4c" /><rect x="739" y="131" width="74" height="1" fill="#303030" /><rect x="739" y="132" width="55" height="17" fill="#e98e69" /><rect x="794" y="132" width="1" height="17" fill="#303030" /><rect x="795" y="132" width="17" height="17" fill="#4c6c4c" /><rect x="739" y="149" width="74" height="1" fill="#303030" /><rect x="739" y="150" width="73" height="43" fill="#fefefe" /><rect x="739" y="193" width="74" height="1" fill="#303030" /><rect x="739" y="194" width="73" height="17" fill="#4c6c4c" /><line x1="795.5" y1="196" x2="795.5" y2="210" stroke="#2f472f" stroke-dasharray="1 2"/><rect x="812" y="95" width="1" height="116" fill="#303030" /><path d="M760.5 122.5 C763.5 118.0 770.5 118.0 773.5 122.5 C770.5 127.0 763.5 127.0 760.5 122.5 Z" fill="none" stroke="#1b1b1b" stroke-width="2" /><circle cx="767" cy="122.5" r="1.9" fill="#1b1b1b"/><path d="M800.7 122 V119.3 A2.8 2.8 0 0 1 806.3 119.3 V122" fill="none" stroke="#3f5b3f" stroke-width="1.4" /><rect x="799.5" y="122" width="8" height="6.5" fill="#3f5b3f" /><circle cx="767" cy="140.5" r="5.8" fill="none" stroke="#1b1b1b" stroke-width="1.1"/><rect x="763.5" y="137" width="7" height="7" fill="#1b1b1b" /><path d="M799.5 138.5 H807.5 L803.5 142.5 Z" fill="#111" stroke="none" stroke-width="1" /><rect x="813" y="95" width="8" height="18" fill="#4b4b4b" /><rect x="813" y="114" width="8" height="17" fill="#4b4b4b" /><rect x="813" y="132" width="8" height="17" fill="#4b4b4b" /><rect x="813" y="150" width="8" height="43" fill="#fefefe" /><rect x="813" y="194" width="8" height="17" fill="#4b4b4b" /><rect x="821" y="95" width="1" height="119" fill="#303030" /><rect x="822" y="95" width="9" height="357" fill="#3b3b3b" /><rect x="828" y="111" width="3" height="77" fill="#2e2e2e" /><rect x="823" y="188" width="8" height="8" fill="#5c5c5c" rx="4"/><path d="M825 106 L828 103 V106 Z M829 106 L831 104 V106 Z" fill="#cfcfcf" stroke="none" stroke-width="1" /><path d="M825 207 L828 204 V207 Z M829 207 L831 205 V207 Z" fill="#cfcfcf" stroke="none" stroke-width="1" /><g><circle cx="481" cy="153" r="1.8" fill="#222"/><rect x="480.4" y="154" width="1.2" height="4" fill="#222"/><rect x="475.5" y="157.5" width="10.5" height="22" rx="3" fill="#1e1e1e"/><rect x="477.8" y="163.2" width="5.4" height="11.5" fill="#22a27e"/><path d="M479.5 165 V173 M478 169.5 H483" stroke="#e08a40" stroke-width="1.3"/><ellipse cx="479.5" cy="183.8" rx="5.3" ry="1.8" fill="#777"/><rect x="478.6" y="179" width="2" height="4" fill="#222"/><path d="M552 157.6 H556 L556.5 160 L554.5 161.5 L558.5 162.5 L560 165 L560.5 169 L561.5 171 L560.5 176 L557.5 178.5 L556 180.5 H551.5 L550.5 178 L548.5 176 L548 170 L548.5 164 L550.5 161.5 L552.5 161 Z" fill="#262a2c"/><path d="M551 166 L556 165.5 L556.5 176.5 L551.2 176.5 Z" fill="#4e7a4e"/><rect x="551.5" y="168" width="0.8" height="6" fill="#999"/><rect x="550.5" y="162.8" width="1.6" height="1.2" fill="#6aa0d0"/><rect x="699" y="166.3" width="6" height="8.5" fill="#b062b0"/><path d="M755.5 184 C758 180.5 761 180.5 763 184 C765 188.5 768 188.5 770 184 C772 180.5 775 180.5 777 184.5 C779 187.5 782 187.5 786 186" fill="none" stroke="#f00000" stroke-width="1.7" /></g><rect x="346" y="211" width="476" height="3" fill="#323232" /><rect x="346" y="214" width="27" height="20" fill="#393939" /><rect x="373" y="214" width="47" height="20" fill="#3e3e3e" /><rect x="421" y="214" width="21" height="20" fill="#3f4a55" /><rect x="346" y="234" width="27" height="20" fill="#393939" /><rect x="373" y="234" width="47" height="20" fill="#3e3e3e" /><rect x="421" y="234" width="21" height="20" fill="#3f4a55" /><rect x="346" y="254" width="27" height="20" fill="#393939" /><rect x="373" y="254" width="47" height="20" fill="#3e3e3e" /><rect x="421" y="254" width="21" height="20" fill="#3f4a55" /><rect x="346" y="274" width="27" height="20" fill="#393939" /><rect x="373" y="274" width="47" height="20" fill="#3e3e3e" /><rect x="421" y="274" width="21" height="20" fill="#3f4a55" /><rect x="346" y="294" width="27" height="20" fill="#393939" /><rect x="373" y="294" width="47" height="20" fill="#3e3e3e" /><rect x="421" y="294" width="21" height="20" fill="#3f4a55" /><rect x="346" y="314" width="27" height="20" fill="#393939" /><rect x="373" y="314" width="47" height="20" fill="#3e3e3e" /><rect x="421" y="314" width="21" height="20" fill="#3f4a55" /><rect x="346" y="334" width="27" height="20" fill="#393939" /><rect x="373" y="334" width="47" height="20" fill="#3e3e3e" /><rect x="421" y="334" width="21" height="20" fill="#3f4a55" /><rect x="346" y="354" width="27" height="20" fill="#393939" /><rect x="373" y="354" width="47" height="20" fill="#3e3e3e" /><rect x="421" y="354" width="21" height="20" fill="#3f4a55" /><rect x="346" y="374" width="27" height="20" fill="#393939" /><rect x="373" y="374" width="47" height="20" fill="#3e3e3e" /><rect x="421" y="374" width="21" height="20" fill="#3f4a55" /><rect x="346" y="394" width="27" height="20" fill="#393939" /><rect x="373" y="394" width="47" height="20" fill="#3e3e3e" /><rect x="421" y="394" width="21" height="20" fill="#3f4a55" /><rect x="346" y="414" width="27" height="20" fill="#393939" /><rect x="373" y="414" width="47" height="20" fill="#3e3e3e" /><rect x="421" y="414" width="21" height="20" fill="#3f4a55" /><rect x="346" y="434" width="27" height="20" fill="#393939" /><rect x="373" y="434" width="47" height="20" fill="#3e3e3e" /><rect x="421" y="434" width="21" height="20" fill="#3e4660" /><rect x="346" y="234" width="74" height="1" fill="#313131" /><rect x="421" y="234" width="21" height="1" fill="#353e48" /><rect x="346" y="254" width="74" height="1" fill="#313131" /><rect x="421" y="254" width="21" height="1" fill="#353e48" /><rect x="346" y="274" width="74" height="1" fill="#313131" /><rect x="421" y="274" width="21" height="1" fill="#353e48" /><rect x="346" y="294" width="74" height="1" fill="#313131" /><rect x="421" y="294" width="21" height="1" fill="#353e48" /><rect x="346" y="314" width="74" height="1" fill="#313131" /><rect x="421" y="314" width="21" height="1" fill="#353e48" /><rect x="346" y="334" width="74" height="1" fill="#313131" /><rect x="421" y="334" width="21" height="1" fill="#353e48" /><rect x="346" y="354" width="74" height="1" fill="#313131" /><rect x="421" y="354" width="21" height="1" fill="#353e48" /><rect x="346" y="374" width="74" height="1" fill="#313131" /><rect x="421" y="374" width="21" height="1" fill="#353e48" /><rect x="346" y="394" width="74" height="1" fill="#313131" /><rect x="421" y="394" width="21" height="1" fill="#353e48" /><rect x="346" y="414" width="74" height="1" fill="#313131" /><rect x="421" y="414" width="21" height="1" fill="#353e48" /><rect x="346" y="434" width="74" height="1" fill="#313131" /><rect x="421" y="434" width="21" height="1" fill="#353e48" /><rect x="346" y="454" width="74" height="1" fill="#313131" /><rect x="421" y="454" width="21" height="1" fill="#353e48" /><rect x="420" y="214" width="1" height="238" fill="#333" /><rect x="442" y="214" width="1" height="238" fill="#333" /><rect x="347" y="315" width="73" height="19" fill="#56728b" /><rect x="347.5" y="315.5" width="72" height="18" fill="none" stroke="#f00" stroke-width="1"/><clipPath id="ch"><rect x="349" y="314" width="22" height="10"/></clipPath><clipPath id="cl"><rect x="349" y="324" width="22" height="10"/></clipPath><circle cx="359.4" cy="325" r="9.6" fill="#b3664a" stroke="#f00" stroke-width="1" clip-path="url(#ch)"/><circle cx="359.4" cy="325" r="9.6" fill="#1fa77b" clip-path="url(#cl)"/><path d="M373.5 215.5 H383.5 L373.5 225.5 Z" fill="#a8a8a8" stroke="#111" stroke-width="1" /><path d="M373.5 423.5 V433.5 H383.5 Z" fill="#a8a8a8" stroke="#111" stroke-width="1" /><rect x="443" y="214" width="73" height="20" fill="#3e3e3e" /><rect x="443" y="234" width="73" height="20" fill="#3e3e3e" /><rect x="443" y="254" width="73" height="20" fill="#3e3e3e" /><rect x="443" y="274" width="73" height="20" fill="#3e3e3e" /><rect x="443" y="294" width="73" height="20" fill="#3e3e3e" /><rect x="443" y="314" width="73" height="20" fill="#3e3e3e" /><rect x="443" y="334" width="73" height="20" fill="#3e3e3e" /><rect x="443" y="354" width="73" height="20" fill="#3e3e3e" /><rect x="443" y="374" width="73" height="20" fill="#3e3e3e" /><rect x="443" y="394" width="73" height="20" fill="#3e3e3e" /><rect x="443" y="414" width="73" height="20" fill="#3e3e3e" /><rect x="443" y="434" width="73" height="20" fill="#3e3e3e" /><rect x="443" y="234" width="74" height="1" fill="#313131" /><rect x="443" y="254" width="74" height="1" fill="#313131" /><rect x="443" y="274" width="74" height="1" fill="#313131" /><rect x="443" y="294" width="74" height="1" fill="#313131" /><rect x="443" y="314" width="74" height="1" fill="#313131" /><rect x="443" y="334" width="74" height="1" fill="#313131" /><rect x="443" y="354" width="74" height="1" fill="#313131" /><rect x="443" y="374" width="74" height="1" fill="#313131" /><rect x="443" y="394" width="74" height="1" fill="#313131" /><rect x="443" y="414" width="74" height="1" fill="#313131" /><rect x="443" y="434" width="74" height="1" fill="#313131" /><rect x="443" y="454" width="74" height="1" fill="#313131" /><rect x="443" y="214" width="6" height="20" fill="#393939" /><rect x="449" y="214" width="67" height="20" fill="#575757" /><path d="M443 234 L449 228 V234 Z" fill="#575757" stroke="none" stroke-width="1" /><path d="M443 235 L516 253 M443 253 L516 235" stroke="#858585" stroke-width="1"/><rect x="516" y="214" width="1" height="238" fill="#2c2c2c" /><path d="M443 315 H515 V334 H443 Z" fill="none" stroke="#000" stroke-width="2" /><rect x="517" y="214" width="6" height="20" fill="#3a553a" /><rect x="523" y="214" width="67" height="20" fill="#4c6c4c" /><rect x="517" y="234" width="6" height="20" fill="#3a553a" /><rect x="523" y="234" width="67" height="20" fill="#4c6c4c" /><rect x="517" y="254" width="6" height="20" fill="#3a553a" /><rect x="523" y="254" width="67" height="20" fill="#4c6c4c" /><rect x="517" y="274" width="6" height="20" fill="#3a553a" /><rect x="523" y="274" width="67" height="20" fill="#4c6c4c" /><rect x="517" y="294" width="6" height="20" fill="#3a553a" /><rect x="523" y="294" width="67" height="20" fill="#4c6c4c" /><rect x="517" y="314" width="6" height="20" fill="#3a553a" /><rect x="523" y="314" width="67" height="20" fill="#4c6c4c" /><rect x="517" y="334" width="6" height="20" fill="#3a553a" /><rect x="523" y="334" width="67" height="20" fill="#4c6c4c" /><rect x="517" y="354" width="6" height="20" fill="#3a553a" /><rect x="523" y="354" width="67" height="20" fill="#4c6c4c" /><rect x="517" y="374" width="6" height="20" fill="#3a553a" /><rect x="523" y="374" width="67" height="20" fill="#4c6c4c" /><rect x="517" y="394" width="6" height="20" fill="#3a553a" /><rect x="523" y="394" width="67" height="20" fill="#4c6c4c" /><rect x="517" y="414" width="6" height="20" fill="#3a553a" /><rect x="523" y="414" width="67" height="20" fill="#4c6c4c" /><rect x="517" y="434" width="73" height="20" fill="#3e3e3e" /><rect x="523" y="234" width="67" height="1" fill="#3a523a" /><rect x="523" y="254" width="67" height="1" fill="#3a523a" /><rect x="523" y="274" width="67" height="1" fill="#3a523a" /><rect x="523" y="294" width="67" height="1" fill="#3a523a" /><rect x="523" y="314" width="67" height="1" fill="#3a523a" /><rect x="523" y="334" width="67" height="1" fill="#3a523a" /><rect x="523" y="354" width="67" height="1" fill="#3a523a" /><rect x="523" y="374" width="67" height="1" fill="#3a523a" /><rect x="523" y="394" width="67" height="1" fill="#3a523a" /><rect x="523" y="414" width="67" height="1" fill="#3a523a" /><rect x="517" y="434" width="73" height="1" fill="#313131" /><rect x="517" y="454" width="73" height="1" fill="#313131" /><path d="M517 434 L523 428 V434 Z" fill="#4c6c4c" stroke="none" stroke-width="1" /><path d="M517 435 L590 453 M517 453 L590 435" stroke="#858585" stroke-width="1"/><rect x="590" y="214" width="1" height="238" fill="#2c2c2c" /><rect x="523" y="315" width="67" height="1" fill="#f00" /><rect x="523" y="333" width="67" height="1" fill="#f00" /><rect x="553" y="234" width="1.2" height="100" fill="#f0f0f0" /><rect x="591" y="214" width="6" height="20" fill="#3a553a" /><rect x="597" y="214" width="67" height="20" fill="#4c6c4c" /><rect x="591" y="234" width="6" height="20" fill="#3a553a" /><rect x="597" y="234" width="67" height="20" fill="#4c6c4c" /><rect x="591" y="254" width="6" height="20" fill="#3a553a" /><rect x="597" y="254" width="67" height="20" fill="#4c6c4c" /><rect x="591" y="274" width="6" height="20" fill="#3a553a" /><rect x="597" y="274" width="67" height="20" fill="#4c6c4c" /><rect x="591" y="294" width="6" height="20" fill="#3a553a" /><rect x="597" y="294" width="67" height="20" fill="#4c6c4c" /><rect x="591" y="314" width="6" height="20" fill="#3a553a" /><rect x="597" y="314" width="67" height="20" fill="#4c6c4c" /><rect x="591" y="334" width="6" height="20" fill="#3a553a" /><rect x="597" y="334" width="67" height="20" fill="#4c6c4c" /><rect x="591" y="354" width="6" height="20" fill="#3a553a" /><rect x="597" y="354" width="67" height="20" fill="#4c6c4c" /><rect x="591" y="374" width="6" height="20" fill="#3a553a" /><rect x="597" y="374" width="67" height="20" fill="#4c6c4c" /><rect x="591" y="394" width="6" height="20" fill="#3a553a" /><rect x="597" y="394" width="67" height="20" fill="#4c6c4c" /><rect x="591" y="414" width="6" height="20" fill="#3a553a" /><rect x="597" y="414" width="67" height="20" fill="#4c6c4c" /><rect x="591" y="434" width="73" height="20" fill="#3e3e3e" /><rect x="597" y="234" width="67" height="1" fill="#3a523a" /><rect x="597" y="254" width="67" height="1" fill="#3a523a" /><rect x="597" y="274" width="67" height="1" fill="#3a523a" /><rect x="597" y="294" width="67" height="1" fill="#3a523a" /><rect x="597" y="314" width="67" height="1" fill="#3a523a" /><rect x="597" y="334" width="67" height="1" fill="#3a523a" /><rect x="597" y="354" width="67" height="1" fill="#3a523a" /><rect x="597" y="374" width="67" height="1" fill="#3a523a" /><rect x="597" y="394" width="67" height="1" fill="#3a523a" /><rect x="597" y="414" width="67" height="1" fill="#3a523a" /><rect x="591" y="434" width="73" height="1" fill="#313131" /><rect x="591" y="454" width="73" height="1" fill="#313131" /><path d="M591 434 L597 428 V434 Z" fill="#4c6c4c" stroke="none" stroke-width="1" /><path d="M591 435 L664 453 M591 453 L664 435" stroke="#858585" stroke-width="1"/><rect x="664" y="214" width="1" height="238" fill="#2c2c2c" /><rect x="597" y="315" width="67" height="1" fill="#f00" /><rect x="597" y="333" width="67" height="1" fill="#f00" /><rect x="627" y="234" width="1.2" height="100" fill="#f0f0f0" /><rect x="665" y="214" width="6" height="20" fill="#3a553a" /><rect x="671" y="214" width="67" height="20" fill="#4c6c4c" /><rect x="665" y="234" width="6" height="20" fill="#3a553a" /><rect x="671" y="234" width="67" height="20" fill="#4c6c4c" /><rect x="665" y="254" width="6" height="20" fill="#3a553a" /><rect x="671" y="254" width="67" height="20" fill="#4c6c4c" /><rect x="665" y="274" width="6" height="20" fill="#3a553a" /><rect x="671" y="274" width="67" height="20" fill="#4c6c4c" /><rect x="665" y="294" width="6" height="20" fill="#3a553a" /><rect x="671" y="294" width="67" height="20" fill="#4c6c4c" /><rect x="665" y="314" width="6" height="20" fill="#3a553a" /><rect x="671" y="314" width="67" height="20" fill="#4c6c4c" /><rect x="665" y="334" width="73" height="20" fill="#3e3e3e" /><rect x="665" y="354" width="73" height="20" fill="#3e3e3e" /><rect x="665" y="374" width="73" height="20" fill="#3e3e3e" /><rect x="665" y="394" width="73" height="20" fill="#3e3e3e" /><rect x="665" y="414" width="73" height="20" fill="#3e3e3e" /><rect x="665" y="434" width="73" height="20" fill="#3e3e3e" /><rect x="671" y="234" width="67" height="1" fill="#3a523a" /><rect x="671" y="254" width="67" height="1" fill="#3a523a" /><rect x="671" y="274" width="67" height="1" fill="#3a523a" /><rect x="671" y="294" width="67" height="1" fill="#3a523a" /><rect x="671" y="314" width="67" height="1" fill="#3a523a" /><rect x="665" y="334" width="73" height="1" fill="#313131" /><rect x="665" y="354" width="73" height="1" fill="#313131" /><rect x="665" y="374" width="73" height="1" fill="#313131" /><rect x="665" y="394" width="73" height="1" fill="#313131" /><rect x="665" y="414" width="73" height="1" fill="#313131" /><rect x="665" y="434" width="73" height="1" fill="#313131" /><rect x="665" y="454" width="73" height="1" fill="#313131" /><path d="M665 334 L671 328 V334 Z" fill="#4c6c4c" stroke="none" stroke-width="1" /><path d="M665 335 L738 353 M665 353 L738 335" stroke="#858585" stroke-width="1"/><rect x="738" y="214" width="1" height="238" fill="#2c2c2c" /><rect x="671" y="315" width="67" height="1" fill="#f00" /><rect x="671" y="333" width="67" height="1" fill="#f00" /><rect x="701" y="234" width="1.2" height="100" fill="#f0f0f0" /><rect x="739" y="214" width="6" height="20" fill="#3a553a" /><rect x="745" y="214" width="67" height="20" fill="#4c6c4c" /><rect x="739" y="234" width="6" height="20" fill="#3a553a" /><rect x="745" y="234" width="67" height="20" fill="#4c6c4c" /><rect x="739" y="254" width="6" height="20" fill="#3a553a" /><rect x="745" y="254" width="67" height="20" fill="#4c6c4c" /><rect x="739" y="274" width="6" height="20" fill="#3a553a" /><rect x="745" y="274" width="67" height="20" fill="#4c6c4c" /><rect x="739" y="294" width="6" height="20" fill="#3a553a" /><rect x="745" y="294" width="67" height="20" fill="#4c6c4c" /><rect x="739" y="314" width="6" height="20" fill="#3a553a" /><rect x="745" y="314" width="67" height="20" fill="#4c6c4c" /><rect x="739" y="334" width="73" height="20" fill="#3e3e3e" /><rect x="739" y="354" width="73" height="20" fill="#3e3e3e" /><rect x="739" y="374" width="73" height="20" fill="#3e3e3e" /><rect x="739" y="394" width="73" height="20" fill="#3e3e3e" /><rect x="739" y="414" width="73" height="20" fill="#3e3e3e" /><rect x="739" y="434" width="73" height="20" fill="#3e3e3e" /><rect x="745" y="234" width="67" height="1" fill="#3a523a" /><rect x="745" y="254" width="67" height="1" fill="#3a523a" /><rect x="745" y="274" width="67" height="1" fill="#3a523a" /><rect x="745" y="294" width="67" height="1" fill="#3a523a" /><rect x="745" y="314" width="67" height="1" fill="#3a523a" /><rect x="739" y="334" width="73" height="1" fill="#313131" /><rect x="739" y="354" width="73" height="1" fill="#313131" /><rect x="739" y="374" width="73" height="1" fill="#313131" /><rect x="739" y="394" width="73" height="1" fill="#313131" /><rect x="739" y="414" width="73" height="1" fill="#313131" /><rect x="739" y="434" width="73" height="1" fill="#313131" /><rect x="739" y="454" width="73" height="1" fill="#313131" /><path d="M739 334 L745 328 V334 Z" fill="#4c6c4c" stroke="none" stroke-width="1" /><path d="M739 335 L812 353 M739 353 L812 335" stroke="#858585" stroke-width="1"/><rect x="812" y="214" width="1" height="238" fill="#2c2c2c" /><rect x="745" y="315" width="67" height="1" fill="#f00" /><rect x="745" y="333" width="67" height="1" fill="#f00" /><rect x="775" y="234" width="1.2" height="100" fill="#f0f0f0" /><rect x="421" y="315" width="21" height="1" fill="#f00" /><rect x="421" y="333" width="21" height="1" fill="#f00" /><rect x="806" y="229" width="1.2" height="105" fill="#f0f0f0"/><rect x="801.5" y="217.5" width="11" height="12" fill="#fff" stroke="#000" stroke-width="1"/><circle cx="805.5" cy="221.0" r="2" fill="none" stroke="#000" stroke-width="1.3"/><path d="M805.5 223.0 V227.5 H809.5 M805.5 225.5 H808.5" stroke="#000" stroke-width="1.3" fill="none"/><rect x="801.5" y="316.5" width="11" height="12" fill="#fff" stroke="#000" stroke-width="1"/><circle cx="805.5" cy="320.0" r="2" fill="none" stroke="#000" stroke-width="1.3"/><path d="M805.5 322.0 V326.5 H809.5 M805.5 324.5 H808.5" stroke="#000" stroke-width="1.3" fill="none"/><rect x="801.5" y="335.5" width="11" height="11" rx="1" fill="#fff" stroke="#000" stroke-width="1"/><path d="M804 339 V343 C804 345 809 345 809 342 V338.5 L807 340.5" fill="none" stroke="#000" stroke-width="1.2" /><rect x="813" y="214" width="8" height="20" fill="#474747" /><rect x="813" y="234" width="8" height="20" fill="#474747" /><rect x="813" y="254" width="8" height="20" fill="#474747" /><rect x="813" y="274" width="8" height="20" fill="#474747" /><rect x="813" y="294" width="8" height="20" fill="#474747" /><rect x="813" y="314" width="8" height="20" fill="#474747" /><rect x="813" y="334" width="8" height="20" fill="#474747" /><rect x="813" y="354" width="8" height="20" fill="#474747" /><rect x="813" y="374" width="8" height="20" fill="#474747" /><rect x="813" y="394" width="8" height="20" fill="#474747" /><rect x="813" y="414" width="8" height="20" fill="#3e3e3e" /><rect x="813" y="434" width="8" height="20" fill="#3e3e3e" /><rect x="813" y="234" width="8" height="1" fill="#333" /><rect x="813" y="254" width="8" height="1" fill="#333" /><rect x="813" y="274" width="8" height="1" fill="#333" /><rect x="813" y="294" width="8" height="1" fill="#333" /><rect x="813" y="314" width="8" height="1" fill="#333" /><rect x="813" y="334" width="8" height="1" fill="#333" /><rect x="813" y="354" width="8" height="1" fill="#333" /><rect x="813" y="374" width="8" height="1" fill="#333" /><rect x="813" y="394" width="8" height="1" fill="#333" /><rect x="813" y="414" width="8" height="1" fill="#333" /><rect x="813" y="434" width="8" height="1" fill="#333" /><rect x="813" y="454" width="8" height="1" fill="#333" /><path d="M813 414 L819 408 V414 Z" fill="#474747" stroke="none" stroke-width="1" /><path d="M813 415 L821 421.5 M813 433 L821 426.5" stroke="#858585" stroke-width="1"/><rect x="821" y="214" width="1" height="238" fill="#303030" /><rect x="813" y="315" width="9" height="1" fill="#f00" /><rect x="813" y="333" width="9" height="1" fill="#f00" /><path d="M826 224 L828.5 221 L831 224 Z" fill="#9a9a9a" stroke="none" stroke-width="1" /><rect x="826" y="230" width="8" height="203" fill="#5c5c5c" rx="3"/><path d="M826 443 L828.5 446 L831 443 Z" fill="#9a9a9a" stroke="none" stroke-width="1" /><rect x="421" y="452" width="410" height="14" fill="#3a3a3a" /><rect x="346" y="452" width="75" height="14" fill="#464646" /><path d="M430 456.5 L426 459.5 L430 462.5 Z" fill="#9a9a9a" stroke="none" stroke-width="1" /><rect x="436" y="455" width="268" height="9" fill="#5c5c5c" rx="4.5"/><path d="M813 456.5 L817 459.5 L813 462.5 Z" fill="#9a9a9a" stroke="none" stroke-width="1" /></svg>
<div class="t" style="left:354px;top:49px;font-size:11px;color:#9a9a9a;font-weight:normal;">Scene: Z1</div>
<div class="t" style="left:412px;top:49px;font-size:11px;color:#9a9a9a;font-weight:normal;">::</div>
<div class="t" style="left:428px;top:49px;font-size:11px;color:#9a9a9a;font-weight:normal;">11 Frames</div>
<div class="t" style="left:596px;top:74px;font-size:10px;font-weight:bold;color:#e6e6e6">N</div>
<div class="t" style="left:646px;top:73px;font-size:14px;font-weight:bold;color:#5e5e5e">−1</div>
<div class="t" style="left:672px;top:73px;font-size:14px;font-weight:bold;color:#5e5e5e">+1</div>
<div class="t" style="left:704px;top:73px;font-size:14px;font-weight:bold;color:#5e5e5e">1<span style="font-size:12px;font-weight:normal">'s</span></div>
<div class="t" style="left:727px;top:73px;font-size:14px;font-weight:bold;color:#5e5e5e">2<span style="font-size:12px;font-weight:normal">'s</span></div>
<div class="t" style="left:754px;top:73px;font-size:14px;font-weight:bold;color:#5e5e5e">3<span style="font-size:12px;font-weight:normal">'s</span></div>
<div class="t" style="left:827px;top:73px;font-size:12px;font-weight:bold;color:#e6e6e6">»</div>
<div class="t" style="left:352px;top:193px;font-size:12px;color:#e6e6e6">Frame</div>
<div class="t" style="left:407px;top:170px;font-size:11px;color:#e0e0e0;transform:rotate(90deg);width:46px;height:14px;text-align:center">Camera1</div>
<div class="t" style="left:446px;top:98px;font-size:12px;color:#dede3a">Col1</div>
<div class="t" style="left:445px;top:196px;font-size:12px;color:#e0e0e0">Table</div>
<div class="t" style="left:520px;top:98px;font-size:12px;color:#e4e4e4">Col2</div>
<div class="t" style="left:519px;top:196px;font-size:12px;color:#e0e0e0">Table</div>
<div class="t" style="left:594px;top:98px;font-size:12px;color:#e4e4e4">Col3</div>
<div class="t" style="left:593px;top:196px;font-size:12px;color:#e0e0e0">Table</div>
<div class="t" style="left:668px;top:98px;font-size:12px;color:#e4e4e4">Mask</div>
<div class="t" style="left:667px;top:196px;font-size:12px;color:#e0e0e0">Table</div>
<div class="t" style="left:742px;top:98px;font-size:12px;color:#e4e4e4">Oscil</div>
<div class="t" style="left:741px;top:196px;font-size:12px;color:#e0e0e0">Table</div>
<div class="t" style="left:815px;top:97px;font-size:12px;color:#e4e4e4;width:6px;overflow:hidden">C</div>
<div class="t" style="left:814px;top:195px;font-size:12px;color:#e0e0e0;width:7px;overflow:hidden">T</div>
<div class="t" style="left:375px;top:218px;width:41px;text-align:right;font-size:12.5px;font-weight:bold;color:#a6d2f2">1</div>
<div class="t" style="left:375px;top:238px;width:41px;text-align:right;font-size:12.5px;font-weight:bold;color:#a6d2f2">2</div>
<div class="t" style="left:375px;top:258px;width:41px;text-align:right;font-size:12.5px;font-weight:bold;color:#a6d2f2">3</div>
<div class="t" style="left:375px;top:278px;width:41px;text-align:right;font-size:12.5px;font-weight:bold;color:#a6d2f2">4</div>
<div class="t" style="left:375px;top:298px;width:41px;text-align:right;font-size:12.5px;font-weight:bold;color:#a6d2f2">5</div>
<div class="t" style="left:375px;top:318px;width:41px;text-align:right;font-size:12.5px;font-weight:bold;color:#a6d2f2">6</div>
<div class="t" style="left:375px;top:338px;width:41px;text-align:right;font-size:12.5px;font-weight:bold;color:#a6d2f2">7</div>
<div class="t" style="left:375px;top:358px;width:41px;text-align:right;font-size:12.5px;font-weight:bold;color:#a6d2f2">8</div>
<div class="t" style="left:375px;top:378px;width:41px;text-align:right;font-size:12.5px;font-weight:bold;color:#a6d2f2">9</div>
<div class="t" style="left:375px;top:398px;width:41px;text-align:right;font-size:12.5px;font-weight:bold;color:#a6d2f2">10</div>
<div class="t" style="left:375px;top:418px;width:41px;text-align:right;font-size:12.5px;font-weight:bold;color:#a6d2f2">11</div>
<div class="t" style="left:375px;top:438px;width:41px;text-align:right;font-size:12.5px;font-weight:bold;color:#a6d2f2">12</div>
<div class="t" style="left:450px;top:219px;font-size:11.5px;color:#e8e8e8">Enemy_T~</div>
<div class="t" style="left:524px;top:219px;font-size:11.5px;color:#e8e8e8">CV</div>
<div class="t" style="left:567px;top:220px;width:17px;text-align:right;font-size:12px;color:#e8e8e8">1</div>
<div class="t" style="left:567px;top:340px;width:17px;text-align:right;font-size:12px;color:#e8e8e8">2</div>
<div class="t" style="left:567px;top:360px;width:17px;text-align:right;font-size:12px;color:#e8e8e8">3</div>
<div class="t" style="left:567px;top:380px;width:17px;text-align:right;font-size:12px;color:#e8e8e8">4</div>
<div class="t" style="left:567px;top:400px;width:17px;text-align:right;font-size:12px;color:#e8e8e8">5</div>
<div class="t" style="left:567px;top:420px;width:17px;text-align:right;font-size:12px;color:#e8e8e8">1</div>
<div class="t" style="left:598px;top:219px;font-size:11.5px;color:#e8e8e8">DA</div>
<div class="t" style="left:641px;top:220px;width:17px;text-align:right;font-size:12px;color:#e8e8e8">1</div>
<div class="t" style="left:641px;top:340px;width:17px;text-align:right;font-size:12px;color:#e8e8e8">2</div>
<div class="t" style="left:641px;top:360px;width:17px;text-align:right;font-size:12px;color:#e8e8e8">3</div>
<div class="t" style="left:641px;top:380px;width:17px;text-align:right;font-size:12px;color:#e8e8e8">4</div>
<div class="t" style="left:641px;top:400px;width:17px;text-align:right;font-size:12px;color:#e8e8e8">5</div>
<div class="t" style="left:641px;top:420px;width:17px;text-align:right;font-size:12px;color:#e8e8e8">6</div>
<div class="t" style="left:672px;top:219px;font-size:11.5px;color:#e8e8e8">CW</div>
<div class="t" style="left:715px;top:220px;width:17px;text-align:right;font-size:12px;color:#e8e8e8">1</div>
<div class="t" style="left:746px;top:219px;font-size:11.5px;color:#e8e8e8">CX</div>
<div class="t" style="left:777px;top:220px;width:17px;text-align:right;font-size:12px;color:#e8e8e8">1</div>
<div class="t" style="left:819px;top:338px;font-size:12px;color:#9ec6e6;width:3px;overflow:hidden">C</div>
<!-- /XSHEET CONTENT -->
<!-- LEVEL PALETTE -->
<div class="a" style="left:346px;top:471px;width:485px;height:18px;background:#3a3a3a"></div>
<div class="a" style="left:346px;top:489px;width:485px;height:10px;background:#474747"></div>
<div class="a" style="left:346px;top:499px;width:485px;height:3px;background:#353535"></div>
<div class="t" style="left:354px;top:473px;font-size:11.5px;color:#9a9a9a">Level Palette:</div>
<svg class="a" style="left:0;top:0" width="831" height="502">
<rect x="790" y="475.5" width="3" height="9.5" rx="1" fill="#dcdcdc"/><rect x="795" y="475.5" width="3" height="9.5" rx="1" fill="#dcdcdc"/>
<rect x="823" y="489" width="2" height="10" fill="#353535"/><rect x="825" y="489" width="6" height="10" fill="#5a5a5a"/>
<rect x="689" y="499" width="1" height="3" fill="#2a2a2a"/><rect x="758" y="499" width="1" height="3" fill="#2a2a2a"/>
<path d="M795.2 1.5 L790.8 5 L795.2 8.5 Z" fill="#9a9a9a"/><path d="M805.6 1.5 L810 5 L805.6 8.5 Z" fill="#e8e8e8"/>
<rect x="823" y="4.3" width="9" height="6.5" rx="0.8" fill="#e0e0e0"/><rect x="829.5" y="0" width="1.3" height="4.5" fill="#e0e0e0"/>
<circle cx="827" cy="6.5" r="1.1" fill="#444"/><rect x="826.5" y="7" width="1" height="2.5" fill="#444"/>
</svg>
</body></html>
